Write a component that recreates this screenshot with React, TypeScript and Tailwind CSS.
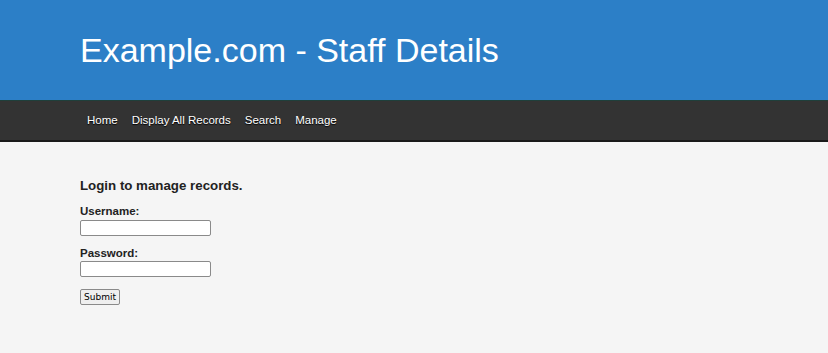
const NAV_LINKS = ["Home", "Display All Records", "Search", "Manage"];

export default function App() {
  return (
    <div className="min-h-[353px] bg-[#f5f5f5] font-['Liberation_Sans',Arial,sans-serif] text-[#222]">
      <header className="h-[100px] bg-[#2c7fc7] flex items-center pl-[80px]">
        <h1 className="text-[34px] leading-none text-white">Example.com - Staff Details</h1>
      </header>

      <nav className="h-[42px] bg-[#333333] border-t border-[#1f3f3a] border-b-2 border-b-[#1a1a1a] flex items-center pl-[80px]">
        {NAV_LINKS.map((link) => (
          <a
            key={link}
            href="#"
            className="px-[7px] pt-[1px] text-[11.5px] text-white [text-shadow:0_1px_1px_#000]"
          >
            {link}
          </a>
        ))}
      </nav>

      <main className="pl-[80px] pt-[37px]">
        <h2 className="text-[13.3px] font-bold leading-none mb-[14px]">Login to manage records.</h2>
        <form onSubmit={(e) => e.preventDefault()}>
          <label className="block text-[11.5px] font-bold leading-none mb-[2px]">Username:</label>
          <input
            type="text"
            className="block w-[131px] h-[16px] bg-white border border-[#8a8a8a] rounded-[2px] mb-[12px]"
          />
          <label className="block text-[11.5px] font-bold leading-none mb-[2px]">Password:</label>
          <input
            type="password"
            className="block w-[131px] h-[16px] bg-white border border-[#8a8a8a] rounded-[2px] mb-[12px]"
          />
          <button
            type="submit"
            className="block h-[16px] px-[3px] text-[9px] leading-none font-['DejaVu_Sans',sans-serif] text-black bg-[#efefef] border border-[#8a8a8a] rounded-[2px]"
          >
            Submit
          </button>
        </form>
      </main>
    </div>
  );
}
